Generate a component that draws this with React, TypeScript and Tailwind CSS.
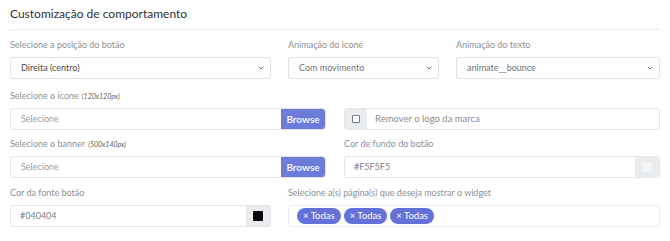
import React from 'react';

const Label: React.FC<{ text: string; hint?: string }> = ({ text, hint }) => (
  <div className="h-[14px] mb-[5px] text-[9px] leading-[14px] text-[#8e9096] whitespace-nowrap">
    {text}
    {hint && <span className="ml-[3px] italic text-[7px] text-[#666]">{hint}</span>}
  </div>
);

const Chevron = () => (
  <svg width="6" height="4" viewBox="0 0 6 4" className="shrink-0">
    <path d="M0.8 0.8 L3 3 L5.2 0.8" fill="none" stroke="#666" strokeWidth="0.9" />
  </svg>
);

const SelectBox: React.FC<{ value: string; dark?: boolean }> = ({ value, dark }) => (
  <div className="h-[22px] flex items-center justify-between border border-[#dfe1e5] rounded-[3px] bg-white pl-[10px] pr-[6px]">
    <span className={`text-[9px] ${dark ? 'text-[#4a4a4a]' : 'text-[#6f7278]'}`}>{value}</span>
    <Chevron />
  </div>
);

const FileInput = () => (
  <div className="h-[22px] flex border border-[#e3e5e8] rounded-[3px] bg-white overflow-hidden">
    <div className="flex-1 flex items-center pl-[10px] text-[9px] text-[#9a9ca2]">Selecione</div>
    <div className="w-[44px] flex items-center justify-center bg-[#6b7cdb] text-white text-[10px] font-semibold rounded-r-[3px]">
      Browse
    </div>
  </div>
);

const ColorInput: React.FC<{ value: string; swatch: string }> = ({ value, swatch }) => (
  <div className="h-[22px] flex border border-[#e3e5e8] rounded-[3px] bg-white overflow-hidden">
    <div className="flex-1 flex items-center pl-[9px] text-[9px] text-[#7d8086]">{value}</div>
    <div className="w-[24px] flex items-center justify-center bg-[#e9ecef]">
      <div className={`w-[10px] h-[10px] rounded-[1px] ${swatch}`} />
    </div>
  </div>
);

const Tag = () => (
  <span className="h-[16px] px-[6px] flex items-center rounded-full bg-[#6371d9] text-white text-[9.5px] whitespace-nowrap">
    × Todas
  </span>
);

export default function App() {
  return (
    <div
      className="w-[670px] h-[241px] bg-white px-[10px] overflow-hidden"
      style={{ fontFamily: 'Lato, "Noto Sans", sans-serif' }}
    >
      <div className="pt-[4px] pb-[5px] border-b border-[#ececec] text-[12px] leading-[20px] text-[#2f3033]">
        Customização de comportamento
      </div>

      <div className="mt-[8px] grid grid-cols-[261px_151px_1fr] gap-x-[17px]">
        <div>
          <Label text="Selecione a posição do botão" />
          <SelectBox value="Direita (centro)" dark />
        </div>
        <div>
          <Label text="Animação do icone" />
          <SelectBox value="Com movimento" />
        </div>
        <div>
          <Label text="Animação do texto" />
          <SelectBox value="animate__bounce" />
        </div>
      </div>

      <div className="mt-[10px] grid grid-cols-[316px_1fr] gap-x-[18px] items-end">
        <div>
          <Label text="Selecione o icone" hint="(120x120px)" />
          <FileInput />
        </div>
        <div className="h-[22px] flex border border-[#e3e5e8] rounded-[3px] bg-white overflow-hidden">
          <div className="w-[22px] flex items-center justify-center bg-[#e9ecef]">
            <div className="w-[8px] h-[8px] border border-[#777] bg-white rounded-[1px]" />
          </div>
          <div className="flex-1 flex items-center pl-[8px] text-[9.5px] text-[#8a8d93]">Remover o logo da marca</div>
        </div>
      </div>

      <div className="mt-[7px] grid grid-cols-[316px_1fr] gap-x-[18px]">
        <div>
          <Label text="Selecione o banner" hint="(500x140px)" />
          <FileInput />
        </div>
        <div>
          <Label text="Cor de fundo do botão" />
          <ColorInput value="#F5F5F5" swatch="bg-[#f5f5f5]" />
        </div>
      </div>

      <div className="mt-[8px] grid grid-cols-[261px_1fr] gap-x-[17px]">
        <div>
          <Label text="Cor da fonte botão" />
          <ColorInput value="#040404" swatch="bg-[#040404]" />
        </div>
        <div>
          <Label text="Selecione a(s) página(s) que deseja mostrar o widget" />
          <div className="h-[22px] flex items-center gap-[3px] border border-[#eceef0] rounded-[3px] bg-white pl-[8px]">
            <Tag />
            <Tag />
            <Tag />
          </div>
        </div>
      </div>
    </div>
  );
}
